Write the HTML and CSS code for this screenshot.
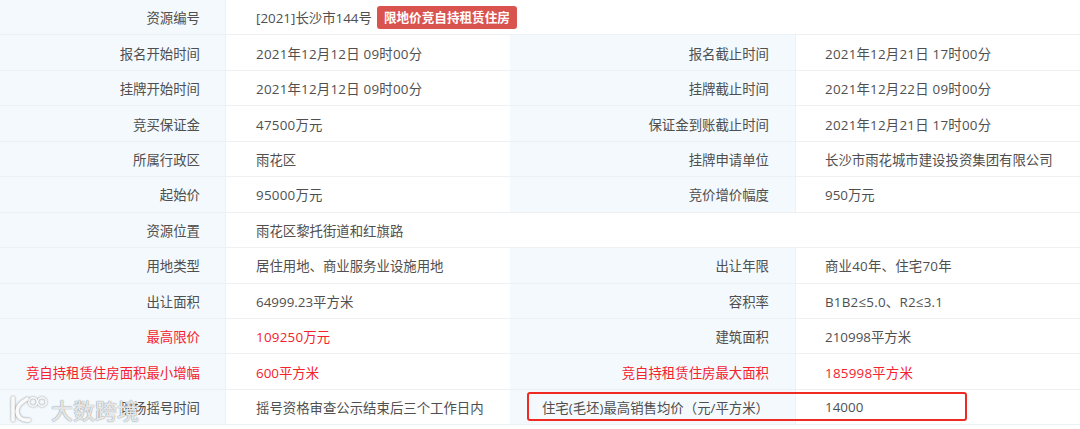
FILE: index.html
```html
<!DOCTYPE html>
<html lang="zh">
<head>
<meta charset="utf-8">
<title>资源详情</title>
<link rel="stylesheet" href="styles.css">
</head>
<body>
<div class="sheet">
  <div class="row"><div class="lab">资源编号</div><div class="val wide">[2021]长沙市144号<span class="tag">限地价竞自持租赁住房</span></div></div>
  <div class="row"><div class="lab">报名开始时间</div><div class="val mix">2021年12月12日 09时00分</div><div class="lab lab2">报名截止时间</div><div class="val val2 mix">2021年12月21日 17时00分</div></div>
  <div class="row"><div class="lab">挂牌开始时间</div><div class="val mix">2021年12月12日 09时00分</div><div class="lab lab2">挂牌截止时间</div><div class="val val2 mix">2021年12月22日 09时00分</div></div>
  <div class="row"><div class="lab">竞买保证金</div><div class="val mix">47500万元</div><div class="lab lab2">保证金到账截止时间</div><div class="val val2 mix">2021年12月21日 17时00分</div></div>
  <div class="row"><div class="lab">所属行政区</div><div class="val">雨花区</div><div class="lab lab2">挂牌申请单位</div><div class="val val2">长沙市雨花城市建设投资集团有限公司</div></div>
  <div class="row"><div class="lab">起始价</div><div class="val mix">95000万元</div><div class="lab lab2">竞价增价幅度</div><div class="val val2">950万元</div></div>
  <div class="row"><div class="lab">资源位置</div><div class="val wide">雨花区黎托街道和红旗路</div></div>
  <div class="row"><div class="lab">用地类型</div><div class="val">居住用地、商业服务业设施用地</div><div class="lab lab2">出让年限</div><div class="val val2 mix">商业40年、住宅70年</div></div>
  <div class="row"><div class="lab">出让面积</div><div class="val">64999.23平方米</div><div class="lab lab2">容积率</div><div class="val val2 mix">B1B2≤5.0、R2≤3.1</div></div>
  <div class="row"><div class="lab red">最高限价</div><div class="val red mix">109250万元</div><div class="lab lab2">建筑面积</div><div class="val val2">210998平方米</div></div>
  <div class="row"><div class="lab red">竞自持租赁住房面积最小增幅</div><div class="val red">600平方米</div><div class="lab lab2 red">竞自持租赁住房最大面积</div><div class="val val2 red mix">185998平方米</div></div>
  <div class="row"><div class="lab">现场摇号时间</div><div class="val">摇号资格审查公示结束后三个工作日内</div><div class="lab lab2">住宅(毛坯)最高销售均价（元/平方米）</div><div class="val val2">14000</div></div>
</div>
<div class="callout"></div>
<div class="mark">
  <svg class="mark-logo" viewBox="0 0 40 36" width="40" height="36" aria-hidden="true">
    <path d="M5 7 L5 29 M19 8 C12 12 9 16 9 20 C9 26 14 30 21 29" fill="none" stroke="#fff" stroke-opacity=".95" stroke-width="3.6" stroke-linecap="round"/>
    <circle cx="25" cy="11" r="4.2" fill="none" stroke="#fff" stroke-opacity=".95" stroke-width="1.5"/>
    <circle cx="34" cy="11" r="4.2" fill="none" stroke="#fff" stroke-opacity=".95" stroke-width="1.5"/>
  </svg>
  <span class="mark-text">大数跨境</span>
</div>
</body>
</html>
```
FILE: styles.css
```css
html, body {
  margin: 0;
  padding: 0;
  background: #fff;
}
body {
  width: 1080px;
  height: 429px;
  overflow: hidden;
  position: relative;
  font-family: "Open Sans", "Noto Sans CJK SC", sans-serif;
  font-size: 13.4px;
  color: #4f4f4f;
}
.sheet {
  display: flex;
  flex-direction: column;
}
.row {
  display: grid;
  grid-template-columns: 226px 284px 286px 284px;
  height: 35.45px;
  border-bottom: 1px solid #eef1f4;
  box-sizing: border-box;
}
.lab {
  display: flex;
  align-items: center;
  justify-content: flex-end;
  padding-right: 25px;
  background: #f3f9fd;
  border-right: 1px solid #eef1f4;
  white-space: nowrap;
}
.lab2 {
  padding-right: 26px;
}
.val {
  display: flex;
  align-items: center;
  padding-left: 30px;
  white-space: nowrap;
}
.val2 {
  padding-left: 29px;
}
.mix {
  letter-spacing: .22px;
}
.wide {
  grid-column: 2 / 5;
}
.red {
  color: #f5222d;
}
.tag {
  margin-left: 5px;
  padding: 0 7px;
  height: 23px;
  line-height: 23px;
  border-radius: 3px;
  background: #d9534f;
  color: #fff;
  font-size: 12.6px;
  font-weight: 700;
}
.callout {
  position: absolute;
  left: 527px;
  top: 392px;
  width: 440px;
  height: 29px;
  box-sizing: border-box;
  border: 2px solid #ee2a22;
  border-radius: 3px;
}
.mark {
  position: absolute;
  left: 8px;
  top: 391px;
  display: flex;
  align-items: center;
  gap: 3px;
}
.mark-logo {
  filter: drop-shadow(0 0 1px rgba(90, 90, 90, .75));
}
.mark-text {
  font-size: 22px;
  font-weight: 500;
  color: rgba(255, 255, 255, .85);
  text-shadow: 0 0 1px rgba(70, 70, 70, .9);
}
```
